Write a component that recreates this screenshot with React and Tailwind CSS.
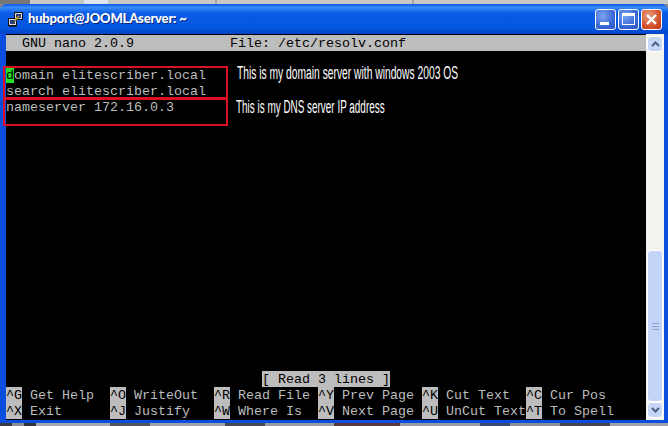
const CELL = "inline-block h-4 leading-[18px] align-top";

function Key({ children }) {
  return <span className={CELL + " bg-[#bdbdbd] text-black"}>{children}</span>;
}

function Row({ children }) {
  return <div className="h-4 leading-[18px] whitespace-pre">{children}</div>;
}

function PuttyIcon() {
  return (
    <svg width="17" height="17" viewBox="0 0 17 17" className="shrink-0">
      <rect x="7.5" y="1.5" width="8" height="7" fill="#d8d8e0" stroke="#111" />
      <rect x="9" y="3" width="5" height="4" fill="#2a3a7a" />
      <rect x="1.5" y="7.5" width="8" height="7" fill="#d8d8e0" stroke="#111" />
      <rect x="3" y="9" width="5" height="4" fill="#2a3a7a" />
      <path d="M11 5 L8 8 L10 8 L6 12 L12 7 L10 7 L13 5 Z" fill="#ffe033" stroke="#7a6a00" strokeWidth="0.5" />
      <rect x="2" y="15" width="8" height="1" fill="#223" />
    </svg>
  );
}

function WinButton({ close, children }) {
  return (
    <div
      className={
        "w-[21px] h-[21px] rounded-[3px] border border-white flex items-center justify-center " +
        (close
          ? "bg-[radial-gradient(circle_at_35%_30%,#e8a080,#d2522a_60%,#b83a18)]"
          : "bg-[radial-gradient(circle_at_35%_30%,#7ea4ee,#3a68d8_60%,#2a50c0)]")
      }
    >
      {children}
    </div>
  );
}

function ScrollArrow({ up }) {
  return (
    <div className="h-4 mx-px rounded-sm border border-white bg-[#c6d6f6] flex items-center justify-center shrink-0">
      <svg width="9" height="6" viewBox="0 0 9 6">
        <path d={up ? "M1 5 L4.5 1.5 L8 5" : "M1 1 L4.5 4.5 L8 1"} fill="none" stroke="#4d6185" strokeWidth="2" />
      </svg>
    </div>
  );
}

export default function App() {
  return (
    <div className="w-[668px] h-[426px] overflow-hidden relative flex flex-col bg-[#8a8a90]">
      {/* desktop behind the window */}
      <div className="h-1 shrink-0 bg-[linear-gradient(90deg,#77777a_0,#77777a_30px,#c8c8c4_30px,#c8c8c4_84px,#dfe6f2_84px,#dfe6f2_108px,#c8c8c4_108px,#c8c8c4_215px,#a6a6a2_215px,#a6a6a2_217px,#c8c8c4_217px,#c8c8c4_412px,#a6a6a2_412px,#a6a6a2_414px,#c8c8c4_414px)]" />

      <div className="flex-1 min-h-0 flex flex-col rounded-t-[7px] bg-[#0a4ee0] overflow-hidden">
        <div className="h-[30px] shrink-0 flex items-center pl-[7px] pr-[6px] bg-[linear-gradient(180deg,#0a58e8_0%,#3a8cf8_12%,#0a5ce8_30%,#0456e0_80%,#0344c8_100%)]">
          <PuttyIcon />
          <span className="ml-1 text-white font-black text-[13px] tracking-[-0.2px] font-['Lato',sans-serif] [text-shadow:1px_1px_0_#0a2a80]">
            hubport@JOOMLAserver: ~
          </span>
          <div className="ml-auto flex gap-[2px]">
            <WinButton>
              <div className="w-[9px] h-[3px] bg-white mt-[9px] -ml-[3px]" />
            </WinButton>
            <WinButton>
              <div className="w-[13px] h-[12px] border border-white border-t-[3px]" />
            </WinButton>
            <WinButton close>
              <svg width="13" height="13" viewBox="0 0 13 13">
                <path d="M2 2 L11 11 M11 2 L2 11" stroke="#fff" strokeWidth="2.4" />
              </svg>
            </WinButton>
          </div>
        </div>

        <div className="flex-1 min-h-0 flex pl-[6px] pr-1">
          <div className="w-[640px] border-t border-black bg-black text-[#bcbcbc] font-['Liberation_Mono',monospace] text-[13.33px] overflow-hidden">
            <div className="bg-[#bdbdbd] text-black">
              <Row>{"  GNU nano 2.0.9            File: /etc/resolv.conf"}</Row>
            </div>
            <Row> </Row>
            <Row>
              <span className={CELL + " bg-[#22e022] text-black"}>d</span>omain elitescriber.local
            </Row>
            <Row>search elitescriber.local</Row>
            <Row>nameserver 172.16.0.3</Row>
            <div className="h-[256px]" />
            <Row>
              {" ".repeat(32)}
              <Key>[ Read 3 lines ]</Key>
            </Row>
            <Row>
              <Key>^G</Key> Get Help  <Key>^O</Key> WriteOut  <Key>^R</Key> Read File <Key>^Y</Key> Prev Page <Key>^K</Key> Cut Text  <Key>^C</Key> Cur Pos
            </Row>
            <Row>
              <Key>^X</Key> Exit      <Key>^J</Key> Justify   <Key>^W</Key> Where Is  <Key>^V</Key> Next Page <Key>^U</Key> UnCut Text<Key>^T</Key> To Spell
            </Row>
          </div>

          <div className="w-[18px] bg-[#f4f3ee] flex flex-col pt-[2px] pb-[2px]">
            <ScrollArrow up />
            <div className="h-[198px]" />
            <div className="flex-1 mx-px rounded-sm border border-white bg-[#c4d4f8] flex items-center justify-center">
              <div className="w-[7px] h-[7px] border-y border-[#8ea2cc] bg-[linear-gradient(180deg,transparent_40%,#8ea2cc_40%,#8ea2cc_60%,transparent_60%)]" />
            </div>
            <ScrollArrow />
          </div>
        </div>
        <div className="h-[3px] shrink-0" />
      </div>

      <div className="h-[3px] shrink-0 bg-[linear-gradient(90deg,#3a3a44_0,#3a3a44_12px,#8e8e98_12px,#8e8e98_24px,#33333c_24px,#33333c_36px,#a8a8b0_36px,#a8a8b0_110px,#55555f_110px,#55555f_150px,#a0a0a8_150px,#a0a0a8_225px,#4a4a56_225px,#4a4a56_265px,#9a9aa4_265px,#9a9aa4_334px,#5a3a3a_334px,#5a3a3a_400px,#9a9aa4_400px,#9a9aa4_480px,#3a4a70_480px,#3a4a70_510px,#8e8e98_510px,#8e8e98_560px,#4a4450_560px,#4a4450_610px,#a0a0a8_610px)]" />

      {/* annotations drawn over the terminal */}
      <div className="absolute left-[3px] top-[66px] w-[225px] h-[33px] border-2 border-[#dc1020]" />
      <div className="absolute left-[3px] top-[98px] w-[225px] h-[28px] border-2 border-[#dc1020]" />
      <div className="absolute left-[237px] top-[60px] text-white whitespace-nowrap origin-left scale-x-[0.571] text-[18px] font-['Liberation_Sans',sans-serif]">
        This is my domain server with windows 2003 OS
      </div>
      <div className="absolute left-[236px] top-[94px] text-white whitespace-nowrap origin-left scale-x-[0.551] text-[18px] font-['Liberation_Sans',sans-serif]">
        This is my DNS server IP address
      </div>
    </div>
  );
}
